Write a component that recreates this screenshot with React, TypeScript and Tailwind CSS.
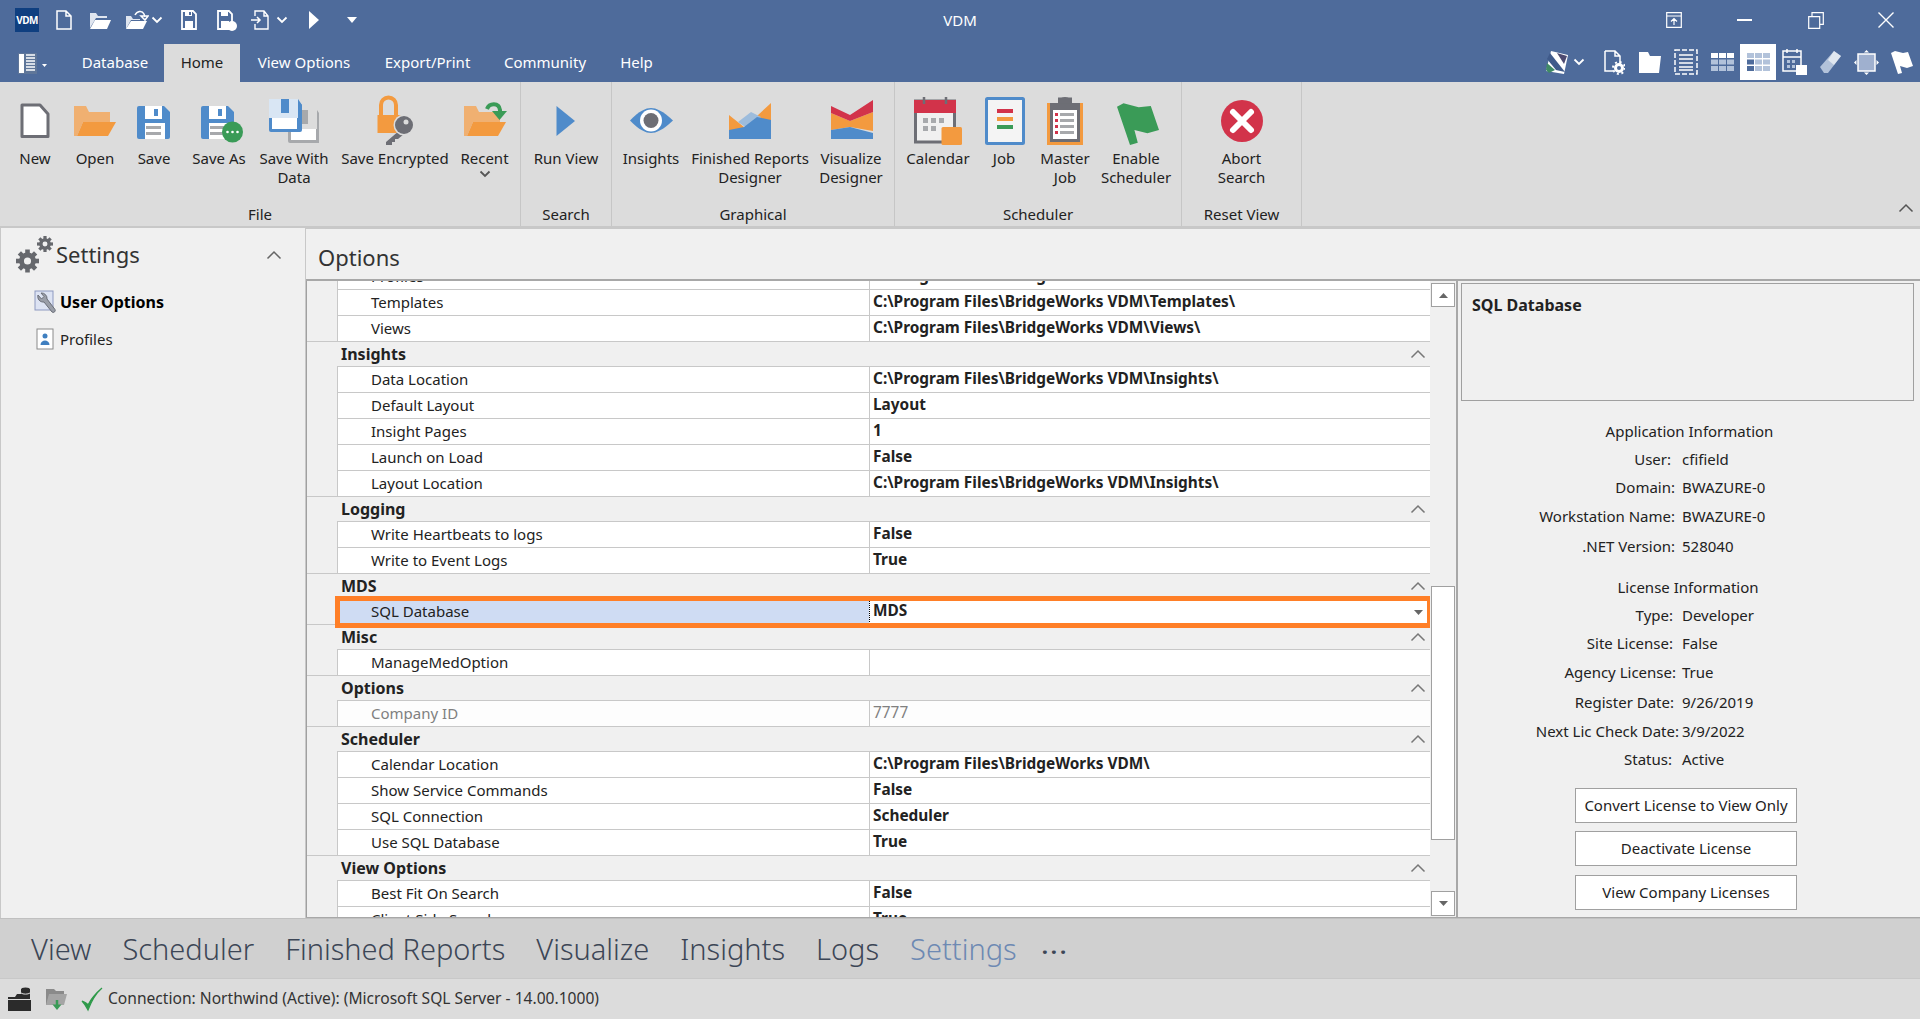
import React from 'react';

const BLUE = '#4f8bca';
const ORANGE = '#f39a3f';
const ORANGE_LIGHT = '#f0b071';
const GREY = '#6d6e75';
const RED = '#d2334a';
const GREEN = '#3a9b57';

// ribbon icons share one box, x = 0 is the centre of the button
const RibbonIcon = ({ children }: { children: React.ReactNode }) => (
  <svg width="50" height="56" viewBox="-25 0 50 56" className="shrink-0">
    {children}
  </svg>
);

const Disk = ({ x, y, body, top, plain }: { x: number; y: number; body: string; top: string; plain?: boolean }) => (
  <g transform={`translate(${x} ${y})`}>
    <path d="M0 2a2 2 0 0 1 2-2h25l6 6v25a2 2 0 0 1-2 2H2a2 2 0 0 1-2-2z" fill={body} />
    {plain ? (
      <>
        <path d="M0 0h29v19H0z" fill={top} />
        <rect x="12" y="0" width="8" height="14" fill={body} />
        <path d="M29 0l4 6v13h-4z" fill={body} />
        <rect x="3" y="19" width="25" height="11" fill="#fff" />
      </>
    ) : (
      <>
        <rect x="8" y="0" width="17" height="13" fill={top} />
        <rect x="17" y="3" width="4" height="7" fill={body} />
        <rect x="8" y="17" width="20" height="16" fill="#fff" />
        <rect x="9" y="20" width="15" height="3" fill="#a7a9ac" />
        <rect x="9" y="26" width="15" height="3" fill="#a7a9ac" />
      </>
    )}
  </g>
);

const Folder = ({ x = 0 }: { x?: number }) => (
  <g transform={`translate(${x} 0)`}>
    <path d="M-21 14h12l3 6h21v10H-12l-6 14h-3z" fill={ORANGE_LIGHT} />
    <path d="M-12 30H21L13 44H-18z" fill={ORANGE} />
  </g>
);

const ribbonIcons: Record<string, React.ReactNode> = {
  new: <path d="M-13 13h18l8 9v22.500h-26z" fill="#fff" stroke={GREY} strokeWidth="3" strokeLinejoin="round" />,
  open: <Folder />,
  save: <Disk x={-17} y={14} body={BLUE} top="#fff" />,
  saveAs: (
    <>
      <Disk x={-18} y={14} body={BLUE} top="#fff" />
      <circle cx="13.500" cy="40" r="10.500" fill={GREEN} />
      <circle cx="8.500" cy="40" r="1.300" fill="#fff" />
      <circle cx="13.500" cy="40" r="1.300" fill="#fff" />
      <circle cx="18.500" cy="40" r="1.300" fill="#fff" />
    </>
  ),
  saveData: (
    <>
      <Disk x={-6} y={18} body="#a7a9ac" top="#dcdcdc" plain />
      <Disk x={-25} y={7} body={BLUE} top="#d9e6f4" plain />
    </>
  ),
  encrypted: (
    <>
      <path d="M-14 24v-11a7.500 7.500 0 0 1 15 0v11" fill="none" stroke={ORANGE} strokeWidth="4" />
      <rect x="-17.500" y="23" width="24" height="18" fill={ORANGE} />
      <path d="M5 38-9 50v3h6v-3h3v-3h3l6-5z" fill={GREY} />
      <circle cx="9" cy="33" r="10.500" fill="#dcdcdc" />
      <circle cx="9" cy="33" r="9" fill={GREY} />
      <circle cx="11" cy="30" r="2.500" fill="#dcdcdc" />
    </>
  ),
  recent: (
    <>
      <Folder />
      <path d="M2 17c2-6 12-7 13 1v3" fill="none" stroke={GREEN} strokeWidth="4" />
      <path d="M7 19h15l-7.500 9z" fill={GREEN} />
    </>
  ),
  run: <path d="M-9.500 14 9 29-9.500 44z" fill={BLUE} />,
  insights: (
    <>
      <path d="M-21 28.500C-12 19-5 16 0 16s12 3 22 12.500C12 38 5 41 0 41s-12-3-21-12.500z" fill={BLUE} />
      <circle cx="0" cy="28.500" r="11" fill="#fff" />
      <circle cx="0" cy="28.500" r="7.500" fill={GREY} />
    </>
  ),
  finished: (
    <>
      <path d="M-21 23-6 35-21 47zM7 24 21 11V47H7z" fill={ORANGE} />
      <path d="M-12 30 1 20 11 25 0 38z" fill="#9dbcdc" />
      <path d="M-21 38-6 35 7 25 21 28V47H-21z" fill={BLUE} />
    </>
  ),
  visualize: (
    <>
      <path d="M-20 21-1 29 22 20V39L-1 35-20 38z" fill={ORANGE} />
      <path d="M-20 14-1 23 22 8V20L-1 29-20 21z" fill={RED} />
      <path d="M-20 38-1 35 22 41V47H-20z" fill={BLUE} />
    </>
  ),
  calendar: (
    <>
      <rect x="-22.500" y="9" width="39" height="41" fill="#f0f0f0" stroke={GREY} strokeWidth="3" />
      <rect x="-24" y="8" width="42" height="13" fill={RED} />
      <path d="M-14 5v7M8 5v7" stroke={GREY} strokeWidth="2.500" />
      <path d="M-15 26h5v5h-5zM-7 26h5v5h-5zM1 26h5v5H1zM-15 34h5v5h-5zM-7 34h5v5h-5z" fill="#a7a9ac" />
      <rect x="3.500" y="35" width="20.500" height="18" rx="1.500" fill={ORANGE} />
    </>
  ),
  job: (
    <>
      <rect x="-17.500" y="6.500" width="37" height="45" rx="1" fill="#f4f4f4" stroke={BLUE} strokeWidth="3" />
      <rect x="-7" y="17" width="16" height="4" fill={RED} />
      <rect x="-7" y="25" width="16" height="4" fill={ORANGE} />
      <rect x="-7" y="33" width="16" height="4" fill={GREEN} />
    </>
  ),
  master: (
    <>
      <rect x="-18" y="11" width="36" height="42" fill={ORANGE} />
      <rect x="-15" y="11" width="30" height="39" fill={GREY} />
      <path d="M-7 11a7 6 0 0 1 14 0z" fill={GREY} />
      <path d="M-7 5.500h14v6h-14z" fill={GREY} />
      <rect x="-12" y="18" width="24" height="29" fill="#fff" />
      <path d="M-10 21h3v3h-3zM-10 27h3v3h-3zM-10 33h3v3h-3zM-10 39h3v3h-3z" fill={RED} />
      <path d="M-5 21h14v3H-5zM-5 27h14v3H-5zM-5 33h14v3H-5zM-5 39h14v3H-5z" fill="#a7a9ac" />
    </>
  ),
  flag: (
    <path
      d="M-19 14.700-12.500 11.300 2.700 15.300 14.800 14 23 38 11.400 41.300-1.600 38 1.800 50.700-6 53z"
      fill={GREEN}
      strokeLinejoin="round"
    />
  ),
  abort: (
    <>
      <circle cx="0" cy="29" r="21" fill={RED} />
      <path d="M-9 20 9 38M9 20-9 38" stroke="#fff" strokeWidth="6" strokeLinecap="round" />
    </>
  )
};

const ribbonGroups = [
  {
    name: 'File',
    width: 'w-[521px]',
    lead: 'pl-2',
    items: [
      { id: 'new', label: 'New', w: 'w-[54px]' },
      { id: 'open', label: 'Open', w: 'w-[66px]' },
      { id: 'save', label: 'Save', w: 'w-[52px]' },
      { id: 'saveAs', label: 'Save As', w: 'w-[78px]' },
      { id: 'saveData', label: 'Save With Data', w: 'w-[72px]' },
      { id: 'encrypted', label: 'Save Encrypted', w: 'w-[130px]' },
      { id: 'recent', label: 'Recent', w: 'w-[49px]', more: true }
    ]
  },
  {
    name: 'Search',
    width: 'w-[91px]',
    lead: '',
    items: [{ id: 'run', label: 'Run View', w: 'w-[90px]' }]
  },
  {
    name: 'Graphical',
    width: 'w-[283px]',
    lead: 'pl-[10px]',
    items: [
      { id: 'insights', label: 'Insights', w: 'w-[58px]' },
      { id: 'finished', label: 'Finished Reports Designer', w: 'w-[140px]' },
      { id: 'visualize', label: 'Visualize Designer', w: 'w-[62px]' }
    ]
  },
  {
    name: 'Scheduler',
    width: 'w-[287px]',
    lead: 'pl-[10px]',
    items: [
      { id: 'calendar', label: 'Calendar', w: 'w-[66px]' },
      { id: 'job', label: 'Job', w: 'w-[66px]' },
      { id: 'master', label: 'Master Job', w: 'w-[56px]' },
      { id: 'flag', label: 'Enable Scheduler', w: 'w-[86px]' }
    ]
  },
  {
    name: 'Reset View',
    width: 'w-[120px]',
    lead: '',
    items: [{ id: 'abort', label: 'Abort\nSearch', w: 'w-[119px]' }]
  }
];

const Chevron = ({ className = '' }: { className?: string }) => (
  <svg width="12" height="8" viewBox="0 0 12 8" className={className}>
    <path d="M1.500 1.500 6 6l4.500-4.500" fill="none" stroke="currentColor" strokeWidth="1.800" />
  </svg>
);

const ChevronUp = ({ className = '' }: { className?: string }) => (
  <svg width="16" height="10" viewBox="0 0 16 10" className={className}>
    <path d="M1.500 8.500 8 2l6.500 6.500" fill="none" stroke="currentColor" strokeWidth="1.500" />
  </svg>
);

const Wh = ({ w, h = 22, children, className = '' }: { w: number; h?: number; children: React.ReactNode; className?: string }) => (
  <svg width={w} height={h} viewBox={`0 0 ${w} ${h}`} className={`shrink-0 ${className}`}>
    {children}
  </svg>
);

const QuickBar = () => (
  <div className="flex items-center h-full pl-[15px] text-white">
    <div className="w-6 h-6 bg-[#0f3f80] flex items-center justify-center text-[10px] font-bold tracking-[-0.5px] leading-none">VDM</div>
    <Wh w={18} className="ml-[16px]">
      <path d="M2 2h9l5 5v13H2zM11 2v5h5" fill="none" stroke="#fff" strokeWidth="1.500" />
    </Wh>
    <Wh w={23} className="ml-[16px]">
      <path d="M1 4h6l2 3h9v2H7L1 19z" fill="#dfe5ef" />
      <path d="M6 11h16l-4 9H1z" fill="#fff" />
    </Wh>
    <Wh w={24} className="ml-[13px]">
      <path d="M1 7h5l2 3h7v1H6l-5 9z" fill="#dfe5ef" />
      <path d="M6 12h16l-4 8H1z" fill="#fff" />
      <path d="M10 6c2-4 7-5 9-1l1 3M16 7h7l-3 4z" fill="none" stroke="#fff" strokeWidth="1.500" />
    </Wh>
    <Chevron className="ml-[2px]" />
    <Wh w={18} className="ml-[17px]">
      <path d="M2 2h11l3 3v15H2z" fill="none" stroke="#fff" strokeWidth="1.800" />
      <path d="M5 2h7v5H5zM5 12h8v8H5z" fill="#fff" />
      <path d="M9 3h2v3H9z" fill="#4e6b9b" />
    </Wh>
    <Wh w={22} className="ml-[18px]">
      <path d="M2 2h11l3 3v15H2z" fill="none" stroke="#fff" strokeWidth="1.800" />
      <path d="M5 2h7v5H5zM5 12h8v8H5z" fill="#fff" />
      <circle cx="16" cy="17" r="5" fill="#fff" />
    </Wh>
    <Wh w={19} className="ml-[13px]">
      <path d="M4 7V2h9l4 5v13H4v-5M13 2v5h4" fill="none" stroke="#fff" strokeWidth="1.400" />
      <path d="M0 11h9M6 8l3 3-3 3" fill="none" stroke="#fff" strokeWidth="1.500" />
    </Wh>
    <Chevron className="ml-[6px]" />
    <Wh w={10} className="ml-[21px]">
      <path d="M0 2 10 11 0 20z" fill="#fff" />
    </Wh>
    <Wh w={10} h={6} className="ml-[28px]">
      <path d="M0 0h10L5 6z" fill="#fff" />
    </Wh>
  </div>
);

const WindowButtons = () => (
  <div className="flex items-center justify-end h-full text-white">
    <div className="w-[71px] flex justify-center">
      <Wh w={16} h={16}>
        <path d="M.700.700h14.600v14.600H.700zM.700 4h14.600M8 13V7M5 9.500 8 6.500l3 3" fill="none" stroke="#fff" strokeWidth="1.200" />
      </Wh>
    </div>
    <div className="w-[71px] flex justify-center">
      <div className="w-[15px] h-[2px] bg-white" />
    </div>
    <div className="w-[71px] flex justify-center">
      <Wh w={16} h={17}>
        <path d="M.700 4.700h11v11.600H.700zM4 4.700V.700h11.300v11.600h-3.600" fill="none" stroke="#fff" strokeWidth="1.200" />
      </Wh>
    </div>
    <div className="w-[69px] flex justify-center">
      <Wh w={16} h={16}>
        <path d="M.500.500l15 15M15.500.500l-15 15" fill="none" stroke="#fff" strokeWidth="1.400" />
      </Wh>
    </div>
  </div>
);

const GridGlyph = ({ dark }: { dark?: boolean }) => {
  const cells = [0, 1, 2].flatMap(r => [0, 1, 2].map(c => ({ r, c })));
  return (
    <Wh w={23} h={18}>
      {cells.map(({ r, c }) => (
        <rect
          key={`${r}${c}`}
          x={c * 8}
          y={r * 6.500}
          width="7"
          height="5"
          fill={dark ? (c === 0 && r > 0 ? '#4e6b9b' : '#b2c2da') : r === 0 ? '#fff' : '#b2c2da'}
        />
      ))}
    </Wh>
  );
};

const ToolBtn = ({ children, active }: { children: React.ReactNode; active?: boolean }) => (
  <div className={`w-9 h-9 flex items-center justify-center ${active ? 'bg-white' : ''}`}>{children}</div>
);

const RightTools = () => (
  <div className="flex items-center text-white">
    <Wh w={26} h={25}>
      <path d="M7 1 24 5 20 24 2 21z" fill="#fff" />
      <path d="M6 3 21 22 12 20 3 9z" fill="#3f5a8a" />
      <path d="M13 3 23 6 20 14z" fill="#4d4a70" />
      <path d="M3 13 11 20 5 23 2 20z" fill="#3f8a66" />
    </Wh>
    <Chevron className="ml-[3px] mr-[11px]" />
    <ToolBtn>
      <Wh w={21} h={25}>
        <path d="M1 1h10l5 5v8M1 1v20h8M11 1v5h5" fill="none" stroke="#fff" strokeWidth="1.500" />
        <circle cx="15" cy="18" r="3.500" fill="none" stroke="#fff" strokeWidth="3" />
        <circle cx="15" cy="18" r="6" fill="none" stroke="#fff" strokeWidth="2" strokeDasharray="2 2.700" />
      </Wh>
    </ToolBtn>
    <ToolBtn>
      <Wh w={22} h={21}>
        <path d="M0 0h9l2 4h11l-2 17H0z" fill="#fff" />
      </Wh>
    </ToolBtn>
    <ToolBtn>
      <Wh w={24} h={26}>
        <rect x="1" y="1" width="22" height="24" fill="none" stroke="#fff" strokeWidth="1.500" strokeDasharray="5 2" />
        <path d="M5 6h14M5 10h14M5 14h14M5 18h14M5 21h14" stroke="#fff" strokeWidth="1.500" />
      </Wh>
    </ToolBtn>
    <ToolBtn>
      <GridGlyph />
    </ToolBtn>
    <ToolBtn active>
      <GridGlyph dark />
    </ToolBtn>
    <ToolBtn>
      <Wh w={25} h={26}>
        <path d="M1 2v20h18V2zM1 8h18M5 0v4M15 0v4" fill="none" stroke="#fff" strokeWidth="1.500" />
        <path d="M5 11h3v3H5zM10 11h3v3h-3zM5 16h3v3H5zM10 16h3v3h-3z" fill="#b2c2da" />
        <rect x="14" y="16" width="11" height="10" fill="#fff" />
      </Wh>
    </ToolBtn>
    <ToolBtn>
      <Wh w={23} h={26}>
        <path d="M1 18 15 2l7 5L9 24H5z" fill="#b2c2da" />
        <path d="M9 11 15 2l7 5-7 9z" fill="#fff" opacity="0.600" />
      </Wh>
    </ToolBtn>
    <ToolBtn>
      <Wh w={25} h={25}>
        <rect x="4" y="4" width="17" height="17" fill="#9fb0cf" stroke="#fff" strokeWidth="1.500" />
        <path d="M12.500 0l2.500 2.500h-5zM12.500 25l-2.500-2.500h5zM0 12.500l2.500-2.500v5zM25 12.500l-2.500 2.500v-5z" fill="#fff" />
      </Wh>
    </ToolBtn>
    <ToolBtn>
      <Wh w={22} h={25}>
        <path d="M0 3 4 1l8 2 5-1 5 14-6 2-7-2 2 7-4 1z" fill="#fff" />
      </Wh>
    </ToolBtn>
  </div>
);

const RibbonItem = ({ id, label, w, more }: { id: string; label: string; w: string; more?: boolean }) => (
  <div className={`${w} flex flex-col items-center shrink-0`}>
    <RibbonIcon>{ribbonIcons[id]}</RibbonIcon>
    <div className="mt-[1px] text-center leading-[19px] text-[#222] whitespace-pre-line">{label}</div>
    {more && <Chevron className="text-[#555] mt-[2px]" />}
  </div>
);

const Ribbon = () => (
  <div className="h-[146px] bg-[#dcdcdc] border-b-2 border-[#c8c8c8] flex text-[15px] shrink-0">
    {ribbonGroups.map(g => (
      <div key={g.name} className={`${g.width} shrink-0 border-r border-[#c6c6c6] flex flex-col`}>
        <div className={`flex-1 pt-[10px] flex ${g.lead}`}>
          {g.items.map(i => (
            <RibbonItem key={i.id} {...i} />
          ))}
        </div>
        <div className="h-[25px] pt-[1px] text-center text-[#222] leading-[24px]">{g.name}</div>
      </div>
    ))}
    <div className="ml-auto self-end mr-[6px] mb-[13px] text-[#555]">
      <ChevronUp />
    </div>
  </div>
);

const propertyGroups = [
  {
    name: '',
    rows: [
      { label: 'Profiles', value: 'C:\\Program Files\\BridgeWorks VDM\\Profiles\\' },
      { label: 'Templates', value: 'C:\\Program Files\\BridgeWorks VDM\\Templates\\' },
      { label: 'Views', value: 'C:\\Program Files\\BridgeWorks VDM\\Views\\' }
    ]
  },
  {
    name: 'Insights',
    rows: [
      { label: 'Data Location', value: 'C:\\Program Files\\BridgeWorks VDM\\Insights\\' },
      { label: 'Default Layout', value: 'Layout' },
      { label: 'Insight Pages', value: '1' },
      { label: 'Launch on Load', value: 'False' },
      { label: 'Layout Location', value: 'C:\\Program Files\\BridgeWorks VDM\\Insights\\' }
    ]
  },
  {
    name: 'Logging',
    rows: [
      { label: 'Write Heartbeats to logs', value: 'False' },
      { label: 'Write to Event Logs', value: 'True' }
    ]
  },
  { name: 'MDS', rows: [{ label: 'SQL Database', value: 'MDS', selected: true }] },
  { name: 'Misc', rows: [{ label: 'ManageMedOption', value: '' }] },
  { name: 'Options', rows: [{ label: 'Company ID', value: '7777', disabled: true }] },
  {
    name: 'Scheduler',
    rows: [
      { label: 'Calendar Location', value: 'C:\\Program Files\\BridgeWorks VDM\\' },
      { label: 'Show Service Commands', value: 'False' },
      { label: 'SQL Connection', value: 'Scheduler' },
      { label: 'Use SQL Database', value: 'True' }
    ]
  },
  {
    name: 'View Options',
    rows: [
      { label: 'Best Fit On Search', value: 'False' },
      { label: 'Client Side Search', value: 'True' }
    ]
  }
];

type PropRow = { label: string; value: string; selected?: boolean; disabled?: boolean };

const PropertyRow = ({ row, last }: { row: PropRow; last: boolean }) => (
  <div className={`relative flex border-l border-[#c8c8c8] ${last ? 'h-[25px]' : 'h-[26px] border-b'} ${row.disabled ? 'bg-[#fdfdfd]' : 'bg-white'}`}>
    <div className={`w-[531px] shrink-0 pl-[33px] leading-[25px] ${row.selected ? 'bg-[#cfdcf3]' : ''} ${row.disabled ? 'text-[#808080]' : 'text-[#222]'}`}>
      {row.label}
    </div>
    <div
      className={`flex-1 border-l pl-[3px] text-[15.400px] leading-[24px] ${row.selected ? 'border-dotted border-black' : 'border-[#c8c8c8]'} ${
        row.disabled ? 'text-[#808080] font-normal' : 'font-bold text-[#222]'
      }`}
    >
      {row.value}
    </div>
    {row.selected && (
      <>
        <svg width="9" height="5" viewBox="0 0 9 5" className="absolute right-[7px] top-[11px]">
          <path d="M0 0h9L4.500 5z" fill="#666" />
        </svg>
        <div className="absolute -left-[3px] -right-[2px] -top-[3px] -bottom-[4px] border-[5px] border-[#ff7f27]" />
      </>
    )}
  </div>
);

const PropertyGrid = () => (
  <div className="flex-1 min-w-0 overflow-hidden text-[15px]">
    <div className="-mt-[17px]">
      {propertyGroups.map(g => (
        <div key={g.rows[0].label} className="flex border-b border-[#c8c8c8]">
          <div className="w-[30px] shrink-0 bg-[#f0f0f0]" />
          <div className="flex-1 min-w-0">
            {g.name && (
              <div className="h-[25px] pl-[4px] pr-[4px] flex items-center justify-between border-b border-[#c8c8c8] bg-[#f0f0f0] text-[16px] font-bold text-[#222]">
                <span>{g.name}</span>
                <ChevronUp className="text-[#777]" />
              </div>
            )}
            {g.rows.map((r, i) => (
              <PropertyRow key={r.label} row={r} last={i === g.rows.length - 1} />
            ))}
          </div>
        </div>
      ))}
    </div>
  </div>
);

const ScrollBar = () => (
  <div className="w-[26px] shrink-0 bg-[#f0f0f0] flex flex-col pl-[1px] pr-[1px] pt-[2px] pb-[1px]">
    <div className="h-[24px] bg-white border border-[#a0a0a0] flex items-center justify-center shrink-0">
      <svg width="9" height="5" viewBox="0 0 9 5">
        <path d="M0 5h9L4.500 0z" fill="#666" />
      </svg>
    </div>
    <div className="h-[254px] mt-[279px] bg-white border border-[#a0a0a0] shrink-0" />
    <div className="h-[25px] mt-auto bg-white border border-[#a0a0a0] flex items-center justify-center shrink-0">
      <svg width="9" height="5" viewBox="0 0 9 5">
        <path d="M0 0h9L4.500 5z" fill="#666" />
      </svg>
    </div>
  </div>
);

const infoRows = [
  { heading: 'Application Information', m: 'mt-[16px] pl-[5px]' },
  { label: 'User:', value: 'cfifield', pr: 'pr-[8px]', m: '' },
  { label: 'Domain:', value: 'BWAZURE-0', pr: 'pr-[4px]', m: '' },
  { label: 'Workstation Name:', value: 'BWAZURE-0', pr: 'pr-[4px]', m: 'mt-[1px]' },
  { label: '.NET Version:', value: '528040', pr: 'pr-[4px]', m: 'mt-[2px]' },
  { heading: 'License Information', m: 'mt-[13px] pl-[2px]' },
  { label: 'Type:', value: 'Developer', pr: 'pr-[6px]', m: '' },
  { label: 'Site License:', value: 'False', pr: 'pr-[6px]', m: '' },
  { label: 'Agency License:', value: 'True', pr: 'pr-[3px]', m: 'mt-[1px]' },
  { label: 'Register Date:', value: '9/26/2019', pr: 'pr-[5px]', m: 'mt-[2px]' },
  { label: 'Next Lic Check Date:', value: '3/9/2022', pr: 'pr-0', m: 'mt-[1px]' },
  { label: 'Status:', value: 'Active', pr: 'pr-[7px]', m: '' }
];

const LicenseButton = ({ label, m }: { label: string; m: string }) => (
  <div className={`${m} ml-[115px] w-[222px] h-[35px] shrink-0 bg-white border border-[#a0a0a0] flex items-center justify-center`}>{label}</div>
);

const InfoPanel = () => (
  <div className="w-[461px] shrink-0 flex flex-col text-[15px] text-[#222] pl-[2px] pr-[3px] border-l-2 border-[#a8a8a8]">
    <div className="h-[118px] shrink-0 mt-[2px] ml-[1px] border border-[#a0a0a0] pl-[10px] pt-[9px] text-[16px] font-bold">SQL Database</div>
    {infoRows.map(r =>
      r.heading ? (
        <div key={r.heading} className={`${r.m} h-[28px] shrink-0 text-center leading-[28px]`}>
          {r.heading}
        </div>
      ) : (
        <div key={r.label} className={`${r.m} h-[28px] shrink-0 flex leading-[28px]`}>
          <div className={`w-[219px] shrink-0 text-right ${r.pr}`}>{r.label}</div>
          <div className="ml-[3px]">{r.value}</div>
        </div>
      )
    )}
    <LicenseButton label="Convert License to View Only" m="mt-[15px]" />
    <LicenseButton label="Deactivate License" m="mt-[8px]" />
    <LicenseButton label="View Company Licenses" m="mt-[9px]" />
  </div>
);

const Gear = ({ cx, cy, r }: { cx: number; cy: number; r: number }) => (
  <g>
    {[0, 45, 90, 135, 180, 225, 270, 315].map(a => (
      <rect
        key={a}
        x={cx - r * 0.2}
        y={cy - r}
        width={r * 0.4}
        height={r * 0.5}
        fill="#66686d"
        transform={`rotate(${a} ${cx} ${cy})`}
      />
    ))}
    <circle cx={cx} cy={cy} r={r * 0.52} fill="none" stroke="#66686d" strokeWidth={r * 0.42} />
  </g>
);

const Sidebar = () => (
  <div className="w-[305px] shrink-0 border-l border-[#c8c8c8] bg-[#f0f0f0] flex flex-col text-[15px] text-[#222]">
    <div className="flex items-center h-[52px] pl-[14px] pt-[1px] pr-[23px]">
      <svg width="38" height="38" viewBox="0 0 38 38" className="shrink-0">
        <Gear cx={12.500} cy={25} r={11.500} />
        <Gear cx={30} cy={8} r={8} />
      </svg>
      <span className="ml-[3px] text-[22px] text-[#333]">Settings</span>
      <ChevronUp className="ml-auto text-[#666]" />
    </div>
    <div className="mt-[7px] h-[30px] pl-[33px] flex items-center">
      <svg width="23" height="25" viewBox="0 0 23 25" className="shrink-0">
        <rect x="1" y="1" width="18" height="19" fill="#dde3f3" stroke="#8d99c0" />
        <path d="M4 5a5.500 5.500 0 0 0 6 7l8 10a2 2 0 0 0 3-2.500L13 9a5.500 5.500 0 0 0-6-6l3 3.500L7.500 9z" fill="#9a9ea8" stroke="#6a6e78" />
      </svg>
      <span className="ml-[3px] text-[16px] font-bold text-black">User Options</span>
    </div>
    <div className="mt-[7px] h-[30px] pl-[35px] flex items-center">
      <svg width="18" height="22" viewBox="0 0 18 22" className="shrink-0">
        <rect x="1" y="1" width="16" height="20" fill="#fff" stroke="#8a8a8a" />
        <circle cx="9" cy="8" r="2.500" fill="#3f7fc0" />
        <path d="M4.500 17c0-6 9-6 9 0z" fill="#3f7fc0" />
      </svg>
      <span className="ml-[6px]">Profiles</span>
    </div>
  </div>
);

const bottomTabs = ['View', 'Scheduler', 'Finished Reports', 'Visualize', 'Insights', 'Logs'];

const BottomTabs = () => (
  <div className="h-[61px] shrink-0 bg-[#d0d0d0] border-t border-[#c0c0c0] border-b border-b-[#c8c8c8] flex items-center pl-[31px] gap-[31px] text-[29px] font-light text-[#3c4656]">
    {bottomTabs.map(t => (
      <span key={t}>{t}</span>
    ))}
    <span className="text-[#6d89b3]">Settings</span>
    <span className="-ml-[6px] text-[#3c4656] font-bold tracking-[3px] text-[22px] leading-none pb-[8px]">...</span>
  </div>
);

const StatusBar = () => (
  <div className="h-[40px] shrink-0 bg-[#dcdcdc] flex items-center pl-[8px] text-[15.600px] text-[#333]">
    <svg width="24" height="24" viewBox="0 0 24 24" className="shrink-0">
      <path d="M0 10h7l2-3h5v5H0z" fill="#2b2b2b" />
      <path d="M0 13h23v11H0z" fill="#2b2b2b" />
      <rect x="13" y="2" width="9" height="10" fill="#2b2b2b" />
      <ellipse cx="17.500" cy="2.500" rx="4.500" ry="2" fill="#2b2b2b" />
      <path d="M13 6c2 1.500 7 1.500 9 0" fill="none" stroke="#dcdcdc" />
    </svg>
    <svg width="21" height="23" viewBox="0 0 21 23" className="ml-[14px] shrink-0">
      <path d="M0 1h8l2 2h8v14H0z" fill="#8a8a8a" />
      <path d="M3 6h18l-3 11H0z" fill="#a5a5a5" />
      <path d="M11 12v6" stroke="#3a9b57" strokeWidth="2.500" fill="none" />
      <path d="M6.500 16.500h9L11 22z" fill="#3a9b57" />
    </svg>
    <svg width="22" height="25" viewBox="0 0 22 25" className="ml-[14px] shrink-0">
      <path d="M1 14c2 2 4 5 6 9C10 15 14 7 21 1 14 7 10 12 7 18c-1-2-3-3-6-4z" fill="#2f9a4a" stroke="#2f9a4a" strokeWidth="1.200" />
    </svg>
    <span className="ml-[5px]">Connection: Northwind (Active): (Microsoft SQL Server - 14.00.1000)</span>
  </div>
);

const menuTabs = [
  { label: 'Database', w: 'w-[98px]' },
  { label: 'Home', w: 'w-[76px]', active: true },
  { label: 'View Options', w: 'w-[128px]' },
  { label: 'Export/Print', w: 'w-[119px]' },
  { label: 'Community', w: 'w-[116px]' },
  { label: 'Help', w: 'w-[67px]' }
];

export default function App() {
  return (
    <div className="h-screen w-full overflow-hidden flex flex-col bg-[#f0f0f0] [font-family:'Noto_Sans',sans-serif]">
      {/* title bar */}
      <div className="bg-[#4e6b9b] shrink-0 text-white">
        <div className="h-[44px] pb-[4px] grid grid-cols-[1fr_auto_1fr] items-center text-[15px]">
          <QuickBar />
          <span>VDM</span>
          <WindowButtons />
        </div>
        <div className="h-[38px] flex items-stretch text-[15px]">
          <div className="w-[66px] flex items-center pl-[18px] shrink-0">
            <svg width="19" height="21" viewBox="0 0 19 21">
              <rect x="0" y="0" width="19" height="21" fill="#5f7699" />
              <rect x="1" y="1" width="5" height="19" fill="#fff" />
              <path d="M8 2h9M8 5h9M8 8h9M8 11h9M8 14h9M8 17h9" stroke="#fff" strokeWidth="1.500" />
            </svg>
            <svg width="5" height="3" viewBox="0 0 5 3" className="ml-[5px] mt-[4px]">
              <path d="M0 0h5L2.500 3z" fill="#fff" />
            </svg>
          </div>
          {menuTabs.map(t => (
            <div
              key={t.label}
              className={`${t.w} shrink-0 flex items-center justify-center pb-[1px] ${t.active ? 'bg-[#dcdcdc] text-[#222]' : ''}`}
            >
              {t.label}
            </div>
          ))}
          <div className="ml-auto">
            <RightTools />
          </div>
        </div>
      </div>

      <Ribbon />

      {/* main area */}
      <div className="flex-1 min-h-0 flex">
        <Sidebar />
        <div className="flex-1 min-w-0 flex flex-col border-t border-l border-[#c8c8c8]">
          <div className="h-[52px] shrink-0 border-b-2 border-[#a8a8a8] pl-[12px] pt-[6px] flex items-center text-[22px] text-[#333]">Options</div>
          <div className="flex-1 min-h-0 flex border-b border-[#a8a8a8]">
            <div className="w-[1150px] shrink-0 flex border-l border-[#a0a0a0]">
              <PropertyGrid />
              <ScrollBar />
            </div>
            <InfoPanel />
          </div>
        </div>
      </div>

      <BottomTabs />
      <StatusBar />
    </div>
  );
}
